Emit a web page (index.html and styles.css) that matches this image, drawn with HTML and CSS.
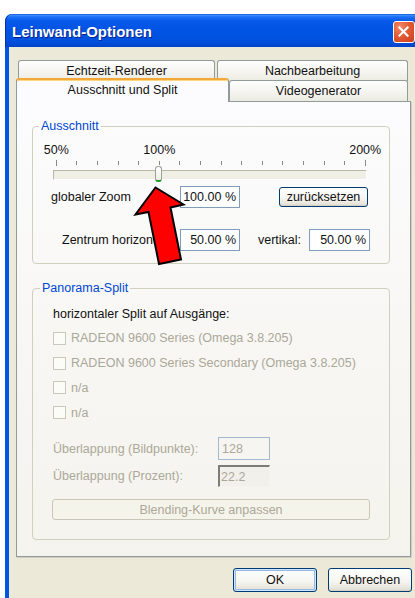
FILE: index.html
```html
<!DOCTYPE html>
<html lang="de">
<head>
<meta charset="utf-8">
<title>Leinwand-Optionen</title>
<link rel="stylesheet" href="styles.css">
</head>
<body>
<div class="window">
  <div class="titlebar">
    <span class="title">Leinwand-Optionen</span>
    <span class="close" aria-label="Schließen">
      <svg viewBox="0 0 22 22" width="20" height="20"><path d="M6 6 L15 15 M15 6 L6 15" stroke="#fff" stroke-width="2.3" stroke-linecap="square"/></svg>
    </span>
  </div>
  <div class="client">
    <div class="tabs">
      <div class="tabrow back">
        <div class="tab t-echtzeit">Echtzeit-Renderer</div>
        <div class="tab t-nach">Nachbearbeitung</div>
      </div>
      <div class="tabrow front">
        <div class="tab active t-aus">Ausschnitt und Split</div>
        <div class="tab t-video">Videogenerator</div>
      </div>
    </div>

    <div class="panel">
      <fieldset class="group group-aus">
        <legend>Ausschnitt</legend>
        <div class="gbody gbody-aus">
          <div class="slider">
            <div class="scale">
              <span class="mark m1"><span>50%</span></span>
              <span class="mark m6"><span>100%</span></span>
              <span class="mark m16"><span>200%</span></span>
            </div>
            <div class="ticks">
              <i class="long"></i><i></i><i></i><i></i><i></i><i></i><i></i><i></i>
              <i></i><i></i><i></i><i></i><i></i><i></i><i></i><i class="long"></i>
            </div>
            <div class="track"><span class="thumb"></span></div>
          </div>
          <div class="row row-zoom">
            <label class="lbl lbl-zoom">globaler Zoom</label>
            <div class="edit edit-zoom">100.00 %</div>
            <button class="btn btn-reset">zurücksetzen</button>
          </div>
          <div class="row row-center">
            <label class="lbl lbl-center">Zentrum horizontal:</label>
            <div class="edit edit-h">50.00 %</div>
            <label class="lbl lbl-vert">vertikal:</label>
            <div class="edit edit-v">50.00 %</div>
          </div>
        </div>
      </fieldset>

      <fieldset class="group group-pan">
        <legend>Panorama-Split</legend>
        <div class="gbody gbody-pan">
          <div class="intro">horizontaler Split auf Ausgänge:</div>
          <ul class="outputs">
            <li><span class="check"></span>RADEON 9600 Series (Omega 3.8.205)</li>
            <li><span class="check"></span>RADEON 9600 Series Secondary (Omega 3.8.205)</li>
            <li><span class="check"></span>n/a</li>
            <li><span class="check"></span>n/a</li>
          </ul>
          <div class="orow">
            <span class="olbl">Überlappung (Bildpunkte):</span>
            <span class="oedit">128</span>
          </div>
          <div class="orow orow-pct">
            <span class="olbl">Überlappung (Prozent):</span>
            <span class="oedit sunken">22.2</span>
          </div>
          <button class="btn btn-blend" disabled>Blending-Kurve anpassen</button>
        </div>
      </fieldset>
    </div>

    <div class="actions">
      <button class="btn btn-ok">OK</button>
      <button class="btn btn-cancel">Abbrechen</button>
    </div>
  </div>
</div>

<svg class="pointer" width="415" height="598" viewBox="0 0 415 598">
  <polygon points="155.5,187.5 183.5,204.5 170.5,207.5 181,259.5 159,264 148.5,212 135.5,214.5"
           fill="#ff0000" stroke="#000" stroke-width="2" stroke-linejoin="miter"/>
</svg>
</body>
</html>
```

FILE: styles.css
```css
html, body {
  margin: 0;
  padding: 0;
}

html {
  background: #fff;
  overflow: hidden;
}

body {
  position: relative;
  width: 415px;
  height: 598px;
  overflow: hidden;
  font-family: "Liberation Sans", Arial, sans-serif;
  font-size: 12.5px;
  line-height: 14px;
  color: #111;
}

/* ---------- window frame ---------- */

.window {
  margin: 14px 0 0 5px;
  width: 425px;
}

.titlebar {
  height: 33px;
  box-sizing: border-box;
  display: flex;
  align-items: center;
  padding: 3px 0 0 7px;
  border-radius: 7px 7px 0 0;
  background: linear-gradient(to bottom,
    #0a3fc8 0px, #3a93ff 1px, #1b6ff5 3px, #0658e8 7px,
    #0054e3 50%, #0050dd 85%, #0043c8 100%);
  box-shadow: inset 1px 0 0 #0a2fa8;
}

.title {
  font-weight: bold;
  font-size: 15px;
  color: #fff;
  text-shadow: 1px 1px 0 #0a1e8a;
}

.close {
  margin-left: auto;
  margin-right: 15px;
  width: 22px;
  height: 22px;
  box-sizing: border-box;
  display: flex;
  align-items: center;
  justify-content: center;
  border: 1px solid #fff;
  border-radius: 3px;
  background: radial-gradient(circle at 30% 25%, #f0896a 0%, #e45a35 45%, #c9401d 100%);
}

.client {
  height: 551px;
  box-sizing: border-box;
  background: #ece9d8;
  border-left: 4px solid #0055e5;
  border-right: 4px solid #0055e5;
  padding: 13px 0 0 7px;
}

/* ---------- tabs ---------- */

.tabs {
  display: flex;
  flex-direction: column;
}

.tabrow {
  display: flex;
}

.tab {
  box-sizing: border-box;
  display: flex;
  align-items: center;
  justify-content: center;
  border: 1px solid #919b9c;
  border-bottom: none;
  border-radius: 3px 3px 0 0;
  background: linear-gradient(to bottom, #fefefe 0%, #f4f3ee 60%, #ebeae2 100%);
}

.tabrow.back {
  padding-left: 2px;
  gap: 2px;
}

.tabrow.back .tab {
  height: 21px;
}

.t-echtzeit { width: 197px; }
.t-nach { width: 191px; }

.tabrow.front {
  margin-top: -3px;
  height: 23px;
  align-items: flex-start;
}

.tabrow.front .tab {
  position: relative;
}

.tab.active {
  z-index: 2;
  width: 213px;
  height: 24px;
  border-top: 2px solid #f2a93a;
  box-shadow: inset 0 1px 0 #ffd77e;
  background: #fcfcfe;
  padding-bottom: 2px;
}

.t-video {
  z-index: 1;
  width: 179px;
  height: 21px;
  margin-top: 2px;
}

/* ---------- tab page ---------- */

.panel {
  width: 395px;
  box-sizing: border-box;
  border: 1px solid #919b9c;
  background: linear-gradient(to bottom, #fcfcfe 0%, #f7f6f2 60%, #f4f3ee 100%);
  box-shadow: 1px 1px 0 #d0cdbe;
  padding: 17px 0 16px 15px;
}

.group {
  width: 358px;
  box-sizing: border-box;
  margin: 0;
  padding: 0;
  min-inline-size: 0;
  border: 1px solid #d0d0bf;
  border-radius: 4px;
}

.group legend {
  color: #0046d5;
  padding: 0 2px;
  line-height: 14px;
}

.group-aus legend { margin-left: 6px; }
.group-pan legend { margin-left: 7px; }

.group-pan {
  margin-top: 17px;
}

.gbody-aus {
  padding: 10px 0 12px 12px;
}

/* slider */

.slider {
  margin-left: 1px;
}

.scale,
.ticks {
  display: grid;
  grid-template-columns: repeat(16, 20.6px);
}

.scale {
  height: 14px;
}

.mark {
  display: flex;
  justify-content: center;
  width: 20.6px;
  white-space: nowrap;
}

.m1 { grid-column: 1; }
.m6 { grid-column: 6; }
.m16 { grid-column: 16; }

.ticks {
  margin-top: 2px;
  height: 7px;
  align-items: center;
  justify-items: center;
}

.ticks i {
  display: block;
  width: 1px;
  height: 4px;
  background: #8a8a84;
}

.ticks i.long {
  height: 6px;
}

.track {
  position: relative;
  margin: 4px 0 0 7px;
  width: 314px;
  height: 10px;
  box-sizing: border-box;
  border-top: 1px solid #b9b7a8;
  border-left: 1px solid #b9b7a8;
  border-bottom: 1px solid #fff;
  border-right: 1px solid #fff;
  background: #f0efe6;
}

.thumb {
  position: absolute;
  left: 101px;
  top: -5px;
  width: 7px;
  height: 16px;
  box-sizing: border-box;
  border: 1px solid #9aa296;
  border-bottom: 2px solid #21a121;
  border-radius: 3px;
  background: linear-gradient(to bottom, #ffffff, #eceee8);
}

/* rows of the cut-out group */

.row {
  display: flex;
  align-items: center;
  height: 22px;
}

.row-zoom { margin-top: 6px; }
.row-center { margin-top: 21px; }

.lbl {
  white-space: nowrap;
}

.lbl-zoom { margin-left: 6px; width: 129px; }
.lbl-center { margin-left: 17px; width: 118px; }
.lbl-vert { margin-left: 18px; width: 51px; }

.edit {
  box-sizing: border-box;
  height: 22px;
  border: 1px solid #7f9db9;
  background: #fff;
  text-align: right;
  padding: 3px 3px 0 0;
  white-space: nowrap;
}

.edit-zoom, .edit-h { width: 60px; }
.edit-v { width: 61px; }

/* buttons */

.btn {
  box-sizing: border-box;
  font: inherit;
  color: #111;
  padding: 0;
  border: 1px solid #003c74;
  border-radius: 3px;
  background: linear-gradient(to bottom, #ffffff 0%, #f4f4f0 60%, #e6e3d9 90%, #d6d0c5 100%);
  box-shadow: inset 0 -1px 0 #d6d0c5;
}

.btn-reset {
  margin-left: 39px;
  width: 89px;
  height: 20px;
}

/* panorama group */

.gbody-pan {
  padding: 12px 0 19px 20px;
}

.intro {
  height: 14px;
}

.outputs {
  list-style: none;
  margin: 5px 0 0 0;
  padding: 0;
  color: #aca899;
}

.outputs li {
  display: flex;
  align-items: center;
  height: 24.75px;
  white-space: nowrap;
}

.check {
  width: 13px;
  height: 13px;
  box-sizing: border-box;
  border: 1px solid #cac8bb;
  background: #fbfbf8;
  margin-right: 5px;
}

.orow {
  display: flex;
  align-items: center;
  height: 23px;
  margin-top: 12px;
  color: #aca899;
}

.orow-pct {
  margin-top: 4px;
}

.olbl {
  width: 165px;
  white-space: nowrap;
}

.oedit {
  box-sizing: border-box;
  width: 52px;
  height: 23px;
  padding: 4px 0 0 3px;
  border: 1px solid #a4b8d2;
  color: #aca899;
}

.oedit.sunken {
  height: 22px;
  padding: 3px 0 0 1px;
  border-top: 2px solid #7c7c78;
  border-left: 2px solid #7c7c78;
  border-right: 1px solid #f4f3ee;
  border-bottom: 1px solid #f4f3ee;
  background: #f1f0ea;
}

.btn-blend {
  display: block;
  margin: 12px 0 0 -1px;
  width: 318px;
  height: 21px;
  border-color: #c9c7ba;
  background: #f5f4ea;
  box-shadow: none;
  color: #aca899;
}

/* dialog buttons */

.actions {
  display: flex;
  justify-content: flex-end;
  gap: 11px;
  width: 396px;
  margin-top: 11px;
}

.btn-ok,
.btn-cancel {
  width: 84px;
  height: 24px;
}

.btn-ok {
  box-shadow: inset 0 0 0 1px #cee7ff, inset 0 0 0 2px #98b8ea, inset 0 -1px 0 1px #bccfef;
}

/* red marker arrow drawn over the dialog */

.pointer {
  position: absolute;
  left: 0;
  top: 0;
  pointer-events: none;
}
```
